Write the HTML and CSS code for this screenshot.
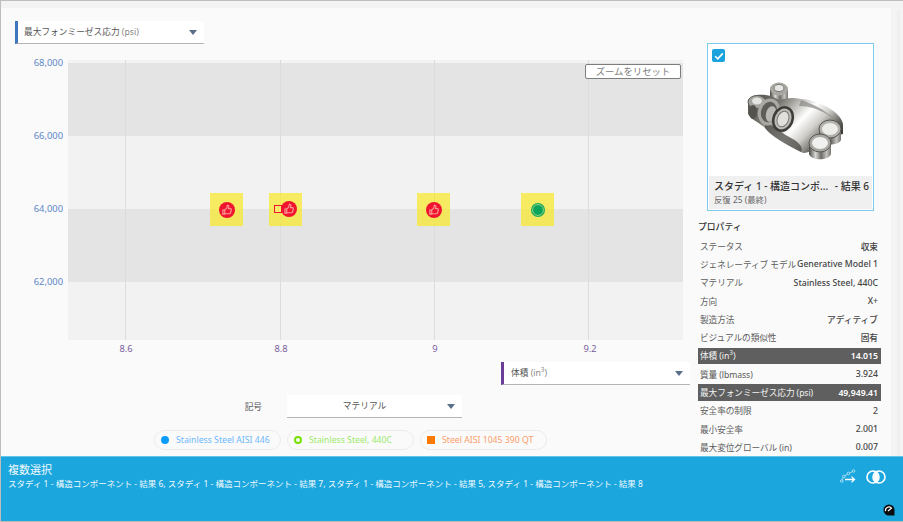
FILE: index.html
```html
<!DOCTYPE html>
<html lang="ja">
<head>
<meta charset="utf-8">
<title>複数選択</title>
<link rel="stylesheet" href="styles.css">
</head>
<body>
<div class="app">
  <div class="strip"></div>
  <div class="main">
    <section class="left">
      <div class="select select-y">
        <span>最大フォンミーゼス応力 <span class="unit">(psi)</span></span>
        <i class="caret"></i>
      </div>
      <div class="chart">
        <div class="y-axis">
          <span>68,000</span><span>66,000</span><span>64,000</span><span>62,000</span>
        </div>
        <div class="plot">
          <div class="band b0"></div>
          <div class="band b1"></div>
          <div class="band b2"></div>
          <div class="band b3"></div>
          <div class="band b4"></div>
          <i class="vline v1"></i><i class="vline v2"></i><i class="vline v3"></i><i class="vline v4"></i>
          <button class="zoom">ズームをリセット</button>
          <div class="pt p1"><svg class="ico" viewBox="0 0 14 14"><circle cx="7" cy="7" r="7" fill="#f0142f"/><path d="M3.4 7h1.6v3.6H3.4zM5 7l1.8-1.7.5-2.4c1-.2 1.6.7 1.3 1.8l-.3 1.1h1.7c.7 0 1 .6.8 1.2l-.8 2.6c-.1.4-.4.7-.9.7H5" fill="none" stroke="#fb9a94" stroke-width="1"/></svg></div>
          <div class="pt p2"><b class="sq"></b><svg class="ico ico2" viewBox="0 0 14 14"><circle cx="7" cy="7" r="7" fill="#f0142f"/><path d="M3.4 7h1.6v3.6H3.4zM5 7l1.8-1.7.5-2.4c1-.2 1.6.7 1.3 1.8l-.3 1.1h1.7c.7 0 1 .6.8 1.2l-.8 2.6c-.1.4-.4.7-.9.7H5" fill="none" stroke="#fb9a94" stroke-width="1"/></svg></div>
          <div class="pt p3"><svg class="ico" viewBox="0 0 14 14"><circle cx="7" cy="7" r="7" fill="#f0142f"/><path d="M3.4 7h1.6v3.6H3.4zM5 7l1.8-1.7.5-2.4c1-.2 1.6.7 1.3 1.8l-.3 1.1h1.7c.7 0 1 .6.8 1.2l-.8 2.6c-.1.4-.4.7-.9.7H5" fill="none" stroke="#fb9a94" stroke-width="1"/></svg></div>
          <div class="pt p4"><svg class="ico ico-g" viewBox="0 0 14 14"><circle cx="7" cy="7" r="7" fill="#18a860"/><circle cx="7" cy="7" r="5.4" fill="#0aa45c" stroke="#8ed47a" stroke-width="1"/><circle cx="7" cy="7" r="3.8" fill="#0aa45c"/></svg></div>
        </div>
        <div class="x-axis">
          <span class="xl x1">8.6</span><span class="xl x2">8.8</span><span class="xl x3">9</span><span class="xl x4">9.2</span>
        </div>
      </div>
      <div class="x-select-row">
        <div class="select select-x">
          <span>体積 <span class="unit">(in<sup>3</sup>)</span></span>
          <i class="caret"></i>
        </div>
      </div>
      <div class="symbol-row">
        <span class="symbol-label">記号</span>
        <div class="select select-sym">
          <span class="sym-text">マテリアル</span>
          <i class="caret"></i>
        </div>
      </div>
      <div class="legend">
        <div class="chip c-blue"><i class="dot"></i>Stainless Steel AISI 446</div>
        <div class="chip c-green"><i class="ring"></i>Stainless Steel, 440C</div>
        <div class="chip c-orange"><i class="square"></i>Steel AISI 1045 390 QT</div>
      </div>
    </section>
    <aside class="right">
      <div class="card">
        <span class="check"><svg viewBox="0 0 12 12" width="12" height="12"><path d="M2.2 6.2l2.6 2.6 5-5.4" fill="none" stroke="#fff" stroke-width="1.6"/></svg></span>
        <div class="thumb">
          <svg class="part" width="110" height="90" viewBox="0 0 110 90">
            <defs>
              <linearGradient id="metal" x1="0" y1="0" x2="1" y2=".6">
                <stop offset="0" stop-color="#4f4d48"/><stop offset=".3" stop-color="#77756f"/>
                <stop offset=".48" stop-color="#c9c8c4"/><stop offset=".6" stop-color="#ffffff"/><stop offset=".75" stop-color="#cfcec9"/><stop offset=".9" stop-color="#6b6964"/><stop offset="1" stop-color="#3f3d39"/>
              </linearGradient>
              <linearGradient id="cyl" x1="0" y1="0" x2="1" y2="0">
                <stop offset="0" stop-color="#4b4944"/><stop offset=".3" stop-color="#d9d9d6"/><stop offset=".55" stop-color="#6e6c67"/><stop offset=".8" stop-color="#c4c3bf"/><stop offset="1" stop-color="#77756f"/>
              </linearGradient>
              <filter id="soft"><feGaussianBlur stdDeviation=".5"/></filter>
            </defs>
            <g filter="url(#soft)">
              <path d="M29 13v10c3 5 15 5 18 0V13Z" fill="url(#cyl)"/>
              <ellipse cx="38" cy="13" rx="9" ry="6.5" fill="#a8a7a2"/>
              <ellipse cx="38" cy="12" rx="5" ry="3.6" fill="#e6e6e4" stroke="#7b7974"/>
              <path d="M7 24V38C10 44 18 46 24 52C30 60 44 68 60 76C66 80 78 70 86 62L102 58V48C100 36 78 24 60 23C52 21 46 22 38 24L30 20C20 18 12 18 7 24Z" fill="url(#metal)"/>
              <path d="M24 52C30 60 44 68 60 76C63 72 58 66 50 62C42 58 34 50 24 46Z" fill="#4a4843" opacity=".75"/>
              <path d="M60 24C72 28 84 34 92 42C80 34 70 30 58 30Z" fill="#8a8883" opacity=".7"/>
              <ellipse cx="16" cy="26" rx="9" ry="6.5" fill="#a5a49f" stroke="#5f5d58"/>
              <ellipse cx="16" cy="25" rx="5" ry="3.5" fill="#e4e4e2"/>
              <ellipse cx="12" cy="36" rx="4" ry="7" fill="#55534e"/>
              <ellipse cx="28" cy="36" rx="9.5" ry="12" transform="rotate(15 28 36)" fill="#5f5d58" stroke="#a9a8a3" stroke-width="3.2"/>
              <ellipse cx="30" cy="38" rx="5" ry="8" transform="rotate(15 30 38)" fill="#b9b8b4"/>
              <ellipse cx="42" cy="43" rx="9.5" ry="12" transform="rotate(22 42 43)" fill="#bdbcb8" stroke="#3f3d39" stroke-width="2.6"/>
              <ellipse cx="42" cy="43" rx="5.6" ry="8" transform="rotate(22 42 43)" fill="#e0dfdc" stroke="#77756f"/>
              <path d="M78 53v11c2 6 20 6 22 0V53Z" fill="url(#cyl)"/>
              <ellipse cx="89" cy="53" rx="11" ry="9" fill="#b2b1ac" stroke="#57554f"/>
              <ellipse cx="89" cy="53" rx="8" ry="6" fill="#ecece9"/>
              <path d="M68 67v11c2 7 20 7 22 0V67Z" fill="url(#cyl)"/>
              <ellipse cx="79" cy="67" rx="11" ry="9" fill="#a8a7a2" stroke="#5b5954"/>
              <ellipse cx="79" cy="67" rx="8" ry="6" fill="#f0f0ee"/>
            </g>
          </svg>
        </div>
        <div class="caption">
          <div class="cap-title"><span>スタディ 1 - 構造コンポ...</span><span>- 結果 6</span></div>
          <div class="cap-sub">反復 25 (最終)</div>
        </div>
      </div>
      <h2 class="prop-title">プロパティ</h2>
      <div class="props">
        <div class="row"><span>ステータス</span><b>収束</b></div>
        <div class="row"><span>ジェネレーティブ モデル</span><b>Generative Model 1</b></div>
        <div class="row"><span>マテリアル</span><b>Stainless Steel, 440C</b></div>
        <div class="row"><span>方向</span><b>X+</b></div>
        <div class="row"><span>製造方法</span><b>アディティブ</b></div>
        <div class="row"><span>ビジュアルの類似性</span><b>固有</b></div>
        <div class="row hl"><span>体積 (in<sup>3</sup>)</span><b>14.015</b></div>
        <div class="row"><span>質量 (lbmass)</span><b>3.924</b></div>
        <div class="row hl"><span>最大フォンミーゼス応力 (psi)</span><b>49,949.41</b></div>
        <div class="row"><span>安全率の制限</span><b>2</b></div>
        <div class="row"><span>最小安全率</span><b>2.001</b></div>
        <div class="row"><span>最大変位グローバル (in)</span><b>0.007</b></div>
      </div>
    </aside>
    <div class="scroll"><i></i></div>
  </div>
  <footer class="footer">
    <div class="foot-text">
      <div class="foot-title">複数選択</div>
      <div class="foot-sub">スタディ 1 - 構造コンポーネント - 結果 6, スタディ 1 - 構造コンポーネント - 結果 7, スタディ 1 - 構造コンポーネント - 結果 5, スタディ 1 - 構造コンポーネント - 結果 8</div>
    </div>
    <div class="foot-icons">
      <div class="foot-actions">
        <svg width="16" height="16" viewBox="0 0 16 16"><g fill="none" stroke="#a9def5" stroke-width="1"><circle cx="1.8" cy="12" r="1.3"/><circle cx="3.8" cy="7.5" r="1.3"/><circle cx="8.5" cy="4.5" r="1.3"/><circle cx="13.5" cy="2" r="1.3"/><path d="M2.4 10.8l.9-2.2M4.9 6.8l2.5-1.6M9.7 4l2.6-1.4"/></g><path d="M5 10.5h9.5M11.5 7.6l3 2.9-3 2.9" fill="none" stroke="#fff" stroke-width="1.3"/></svg>
        <svg width="20" height="16" viewBox="0 0 20 16"><circle cx="7" cy="8" r="6" fill="none" stroke="#fff" stroke-width="1.6"/><circle cx="13" cy="8" r="6" fill="none" stroke="#fff" stroke-width="1.6"/><path d="M10 3.2a6 6 0 0 1 0 9.6a6 6 0 0 1 0-9.6Z" fill="#fff"/></svg>
      </div>
      <svg class="gauge" width="12" height="12" viewBox="0 0 12 12"><path d="M6 .5a5.5 5.5 0 0 1 5.5 5.5v5.5H6A5.5 5.5 0 0 1 6 .5Z" fill="#0c0c0c"/><path d="M2.6 7.2A3.4 3.4 0 0 1 8.8 4.6M5 7l3.6-3" fill="none" stroke="#fff" stroke-width="1.2"/></svg>
    </div>
  </footer>
</div>
</body>
</html>
```
FILE: styles.css
```css
* { box-sizing: border-box; }
html, body { margin: 0; padding: 0; }
body {
  width: 903px;
  height: 522px;
  overflow: hidden;
  font-family: "Noto Sans", "Noto Sans CJK JP", sans-serif;
  font-size: 8.7px;
  color: #4a4a4a;
  background: #fafafa;
}
.app {
  width: 903px;
  height: 522px;
  display: flex;
  flex-direction: column;
  border-top: 1px solid #bdbdbd;
  border-left: 1px solid #bdbdbd;
  border-bottom: 1px solid #bdbdbd;
}
.strip { height: 7px; background: #f3f3f3; flex: none; }
.main { height: 448px; flex: none; display: flex; background: #fafafa; overflow: hidden; }
.left { width: 689px; flex: none; padding: 13px 0 0 14px; display: flex; flex-direction: column; }
.select {
  display: flex;
  align-items: center;
  justify-content: space-between;
  height: 23px;
  flex: none;
  background: #fff;
  border-bottom: 1px solid #b4b4b4;
  color: #555;
  font-size: 8.7px;
  line-height: 1;
}
.unit { color: #888; }
.select sup, .row sup { font-size: 6.5px; line-height: 0; }
.caret {
  width: 0;
  height: 0;
  flex: none;
  border-left: 4.5px solid transparent;
  border-right: 4.5px solid transparent;
  border-top: 5px solid #5a6f8a;
}
.select-y { width: 189px; border-left: 3px solid #3f76bd; padding: 0 7px 0 6px; }
.chart { position: relative; display: flex; flex-wrap: wrap; margin-top: 16px; height: 301px; }
.y-axis {
  width: 53px;
  height: 280px;
  display: flex;
  flex-direction: column;
  align-items: flex-end;
  padding-right: 5px;
  color: #5f88c9;
  font-size: 9.4px;
  line-height: 14px;
  margin-top: -4px;
  gap: 59.1px;
}
.plot { position: relative; width: 615px; height: 280px; background: #f2f2f2; }
.band { width: 100%; }
.b0 { height: 3px; background: #f3f3f3; }
.b1 { height: 73px; background: #e4e4e4; }
.b2 { height: 73px; background: #f2f2f2; }
.b3 { height: 73px; background: #e4e4e4; }
.b4 { height: 58px; background: #f2f2f2; }
.vline { position: absolute; top: 0; bottom: 0; width: 1px; background: #dcdcdc; }
.v1 { left: 57px; }
.v2 { left: 212px; }
.v3 { left: 366px; }
.v4 { left: 520px; }
.zoom {
  position: absolute;
  right: 2px;
  top: 4px;
  width: 96px;
  height: 15px;
  padding: 0;
  background: #fff;
  border: 1px solid #7d7d7d;
  border-radius: 2px;
  color: #7c7c7c;
  font: 9.4px/13px "Noto Sans CJK JP", sans-serif;
}
.pt {
  position: absolute;
  top: 133px;
  width: 33px;
  height: 33px;
  background: rgba(247, 232, 40, .72);
  display: flex;
  align-items: center;
  justify-content: center;
}
.p1 { left: 142px; }
.p2 { left: 201px; }
.p3 { left: 349px; }
.p4 { left: 453px; }
.ico { width: 16px; height: 16px; }
.ico-g { width: 14px; height: 14px; }
.ico2 { position: absolute; left: 12px; top: 8px; }
.sq {
  position: absolute;
  left: 5px;
  top: 12px;
  width: 8px;
  height: 8px;
  border: 1.3px solid #f0142f;
  background: #f6e96a;
}
.x-axis { position: relative; width: 100%; height: 20px; color: #7c5d9f; font-size: 9.4px; line-height: 14px; }
.xl { position: absolute; top: 1px; transform: translateX(-50%); }
.x1 { left: 111px; }
.x2 { left: 266px; }
.x3 { left: 420px; }
.x4 { left: 575px; }
.x-select-row { display: flex; justify-content: flex-end; margin-top: 1px; }
.select-x { width: 189px; border-left: 3px solid #6a3d97; padding: 0 7px; }
.symbol-row { display: flex; align-items: center; margin-top: 10px; }
.symbol-label { width: 247px; margin-right: 25px; text-align: right; color: #555; font-size: 8.7px; }
.select-sym { width: 175px; padding: 0 7px 0 0; }
.sym-text { flex: 1; text-align: center; padding-right: 5px; }
.legend { display: flex; gap: 6px; margin: 12px 0 0 139px; }
.chip {
  display: flex;
  align-items: center;
  gap: 7px;
  width: 127px;
  height: 20px;
  padding-left: 6px;
  border: 1px solid #ececec;
  border-radius: 10px;
  white-space: nowrap;
  flex: none;
}
.c-blue { color: #6cb8ff; }
.c-green { color: #9ceb6b; }
.c-orange { color: #fb9d6b; }
.dot { width: 8px; height: 8px; border-radius: 50%; background: #0a9bff; }
.ring { width: 8px; height: 8px; border-radius: 50%; border: 2px solid #77e000; }
.square { width: 8px; height: 8px; background: #ff7a00; }
.right { width: 201px; flex: none; padding: 35px 0 0 8px; }
.card {
  position: relative;
  width: 167px;
  height: 168px;
  margin-left: 9px;
  background: #fff;
  border: 1px solid #7ccbec;
  display: flex;
  flex-direction: column;
  padding: 1px;
}
.check {
  position: absolute;
  left: 4px;
  top: 5px;
  width: 13px;
  height: 13px;
  background: #1ba3dd;
  border-radius: 2px;
  display: flex;
  align-items: center;
  justify-content: center;
}
.thumb { flex: 1; min-height: 0; display: flex; align-items: center; justify-content: center; padding: 20px 0 0 10px; }
.part { flex: none; }
.caption { height: 33px; flex: none; background: #f0f0f0; padding: 3px 3px 0 5px; }
.cap-title { display: flex; justify-content: space-between; font-size: 10px; font-weight: 500; line-height: 15px; color: #333; white-space: nowrap; }
.cap-sub { font-size: 8.4px; line-height: 11px; color: #666; }
.prop-title { margin: 9px 0 0 0; font-size: 8.8px; font-weight: 500; line-height: 14px; color: #333; }
.props { margin-top: 3px; }
.row {
  display: flex;
  justify-content: space-between;
  align-items: center;
  height: 18.3px;
  padding: 0 3px 0 2px;
  width: 183px;
  color: #5c5c5c;
  white-space: nowrap;
}
.row span { letter-spacing: -.1px; }
.row b { font-weight: 500; color: #444; }
.hl { background: #5f5f5f; color: #f2f2f2; border-top: 1px solid #fafafa; border-bottom: 1px solid #fafafa; }
.hl b { color: #fff; font-weight: 600; }
.scroll { flex: 1; background: #f4f4f4; padding: 2px 2px 0 6px; }
.scroll i { display: block; width: 3px; height: 100%; background: #efefef; }
.footer {
  flex: 1;
  display: flex;
  justify-content: space-between;
  background: #1ba6dd;
  border-top: 1px solid #62c4ea;
  color: #fff;
  padding: 5px 8px 5px 7px;
}
.foot-title { font-size: 11px; line-height: 16px; color: #f0fafe; }
.foot-sub { font-size: 8.5px; line-height: 12px; color: #f0fafe; white-space: nowrap; }
.foot-icons { display: flex; flex-direction: column; align-items: flex-end; justify-content: space-between; }
.foot-actions { display: flex; align-items: center; gap: 10px; margin: 7px 9px 0 0; }
```
